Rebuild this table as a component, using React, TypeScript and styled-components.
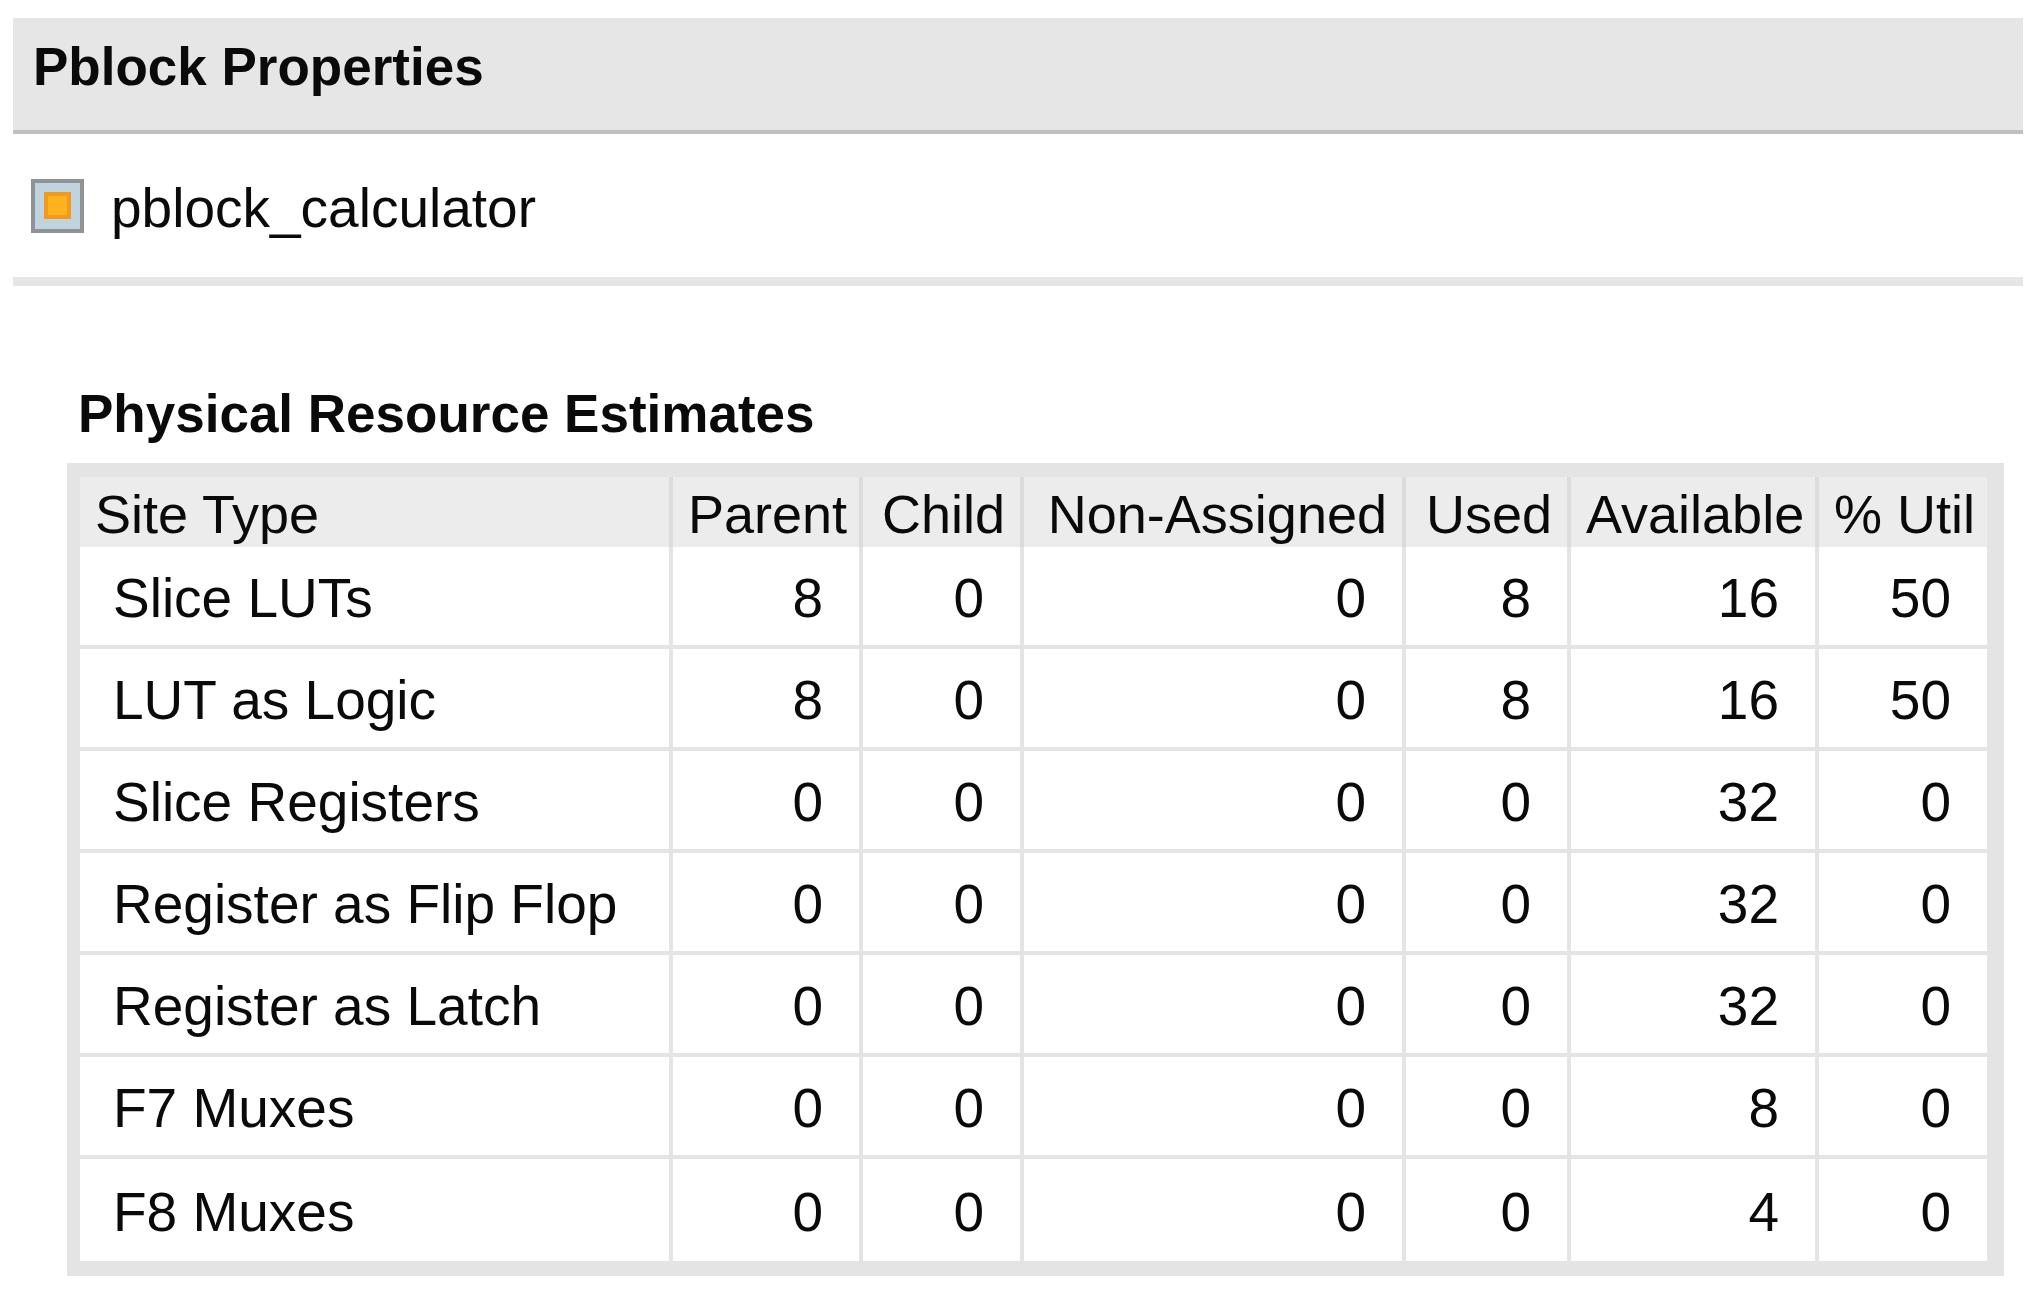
import React from 'react';
import styled, { createGlobalStyle } from 'styled-components';

const GlobalStyle = createGlobalStyle`
  body {
    margin: 0;
    background: #fff;
    font-family: 'Liberation Sans', Arial, sans-serif;
    color: #0a0a0a;
  }
`;

const Page = styled.div`
  display: flex;
  flex-direction: column;
  padding: 18px 14px 0 13px;
`;

const HeaderBar = styled.div`
  height: 90px;
  padding: 22px 0 0 20px;
  background: #e6e6e6;
  border-bottom: 4px solid #bfbfbf;
`;

const Title = styled.div`
  font-size: 53px;
  font-weight: bold;
  line-height: 1;
`;

const ItemRow = styled.div`
  display: flex;
  align-items: center;
  gap: 27px;
  height: 143px;
  padding-left: 18px;
`;

const PblockIcon = styled.div`
  display: flex;
  align-items: center;
  justify-content: center;
  width: 53px;
  height: 54px;
  box-sizing: border-box;
  border: 4px solid #8f9396;
  background: #c0d4e0;
`;

const PblockIconInner = styled.div`
  width: 27px;
  height: 27px;
  box-sizing: border-box;
  border: 4px solid #f39a1e;
  background: #ffb21a;
`;

const ItemName = styled.span`
  font-size: 55px;
  line-height: 1;
  margin-top: 6px;
`;

const Separator = styled.div`
  height: 9px;
  background: #e6e6e6;
`;

const SectionTitle = styled.div`
  margin: 101px 0 0 65px;
  font-size: 53px;
  font-weight: bold;
  line-height: 1;
`;

const TableFrame = styled.div`
  margin: 23px 19px 0 54px;
  padding: 14px 17px 15px 13px;
  background: #e4e4e4;
`;

const Table = styled.table`
  width: 1907px;
  table-layout: fixed;
  border-collapse: separate;
  border-spacing: 0;
`;

const HeadCell = styled.th<{ $align: 'left' | 'right'; $w: number; $last?: boolean }>`
  box-sizing: border-box;
  width: ${(p) => p.$w}px;
  height: 70px;
  padding: 4px 15px 0 15px;
  background: #ececec;
  border-right: ${(p) => (p.$last ? 'none' : '4px solid #dcdcdc')};
  font-size: 54px;
  font-weight: normal;
  text-align: ${(p) => p.$align};
  vertical-align: middle;
  white-space: nowrap;
  line-height: 1;
`;

const Cell = styled.td<{ $first?: boolean; $last?: boolean; $bottom?: boolean }>`
  box-sizing: border-box;
  height: 102px;
  padding: ${(p) => (p.$first ? '4px 0 0 33px' : '4px 36px 0 0')};
  background: #fff;
  border-right: ${(p) => (p.$last ? 'none' : '4px solid #e4e4e4')};
  border-bottom: ${(p) => (p.$bottom ? 'none' : '4px solid #e4e4e4')};
  font-size: 55px;
  text-align: ${(p) => (p.$first ? 'left' : 'right')};
  vertical-align: middle;
  white-space: nowrap;
  line-height: 1;
`;

const columns: { label: string; width: number }[] = [
  { label: 'Site Type', width: 593 },
  { label: 'Parent', width: 190 },
  { label: 'Child', width: 161 },
  { label: 'Non-Assigned', width: 382 },
  { label: 'Used', width: 165 },
  { label: 'Available', width: 248 },
  { label: '% Util', width: 168 },
];

const rows: (string | number)[][] = [
  ['Slice LUTs', 8, 0, 0, 8, 16, 50],
  ['LUT as Logic', 8, 0, 0, 8, 16, 50],
  ['Slice Registers', 0, 0, 0, 0, 32, 0],
  ['Register as Flip Flop', 0, 0, 0, 0, 32, 0],
  ['Register as Latch', 0, 0, 0, 0, 32, 0],
  ['F7 Muxes', 0, 0, 0, 0, 8, 0],
  ['F8 Muxes', 0, 0, 0, 0, 4, 0],
];

export default function App() {
  return (
    <>
      <GlobalStyle />
      <Page>
        <HeaderBar>
          <Title>Pblock Properties</Title>
        </HeaderBar>
        <ItemRow>
          <PblockIcon>
            <PblockIconInner />
          </PblockIcon>
          <ItemName>pblock_calculator</ItemName>
        </ItemRow>
        <Separator />
        <SectionTitle>Physical Resource Estimates</SectionTitle>
        <TableFrame>
          <Table>
            <thead>
              <tr>
                {columns.map((col, i) => (
                  <HeadCell
                    key={col.label}
                    $w={col.width}
                    $align={i === 0 ? 'left' : 'right'}
                    $last={i === columns.length - 1}
                  >
                    {col.label}
                  </HeadCell>
                ))}
              </tr>
            </thead>
            <tbody>
              {rows.map((row, r) => (
                <tr key={row[0]}>
                  {row.map((value, i) => (
                    <Cell
                      key={i}
                      $first={i === 0}
                      $last={i === row.length - 1}
                      $bottom={r === rows.length - 1}
                    >
                      {value}
                    </Cell>
                  ))}
                </tr>
              ))}
            </tbody>
          </Table>
        </TableFrame>
      </Page>
    </>
  );
}
